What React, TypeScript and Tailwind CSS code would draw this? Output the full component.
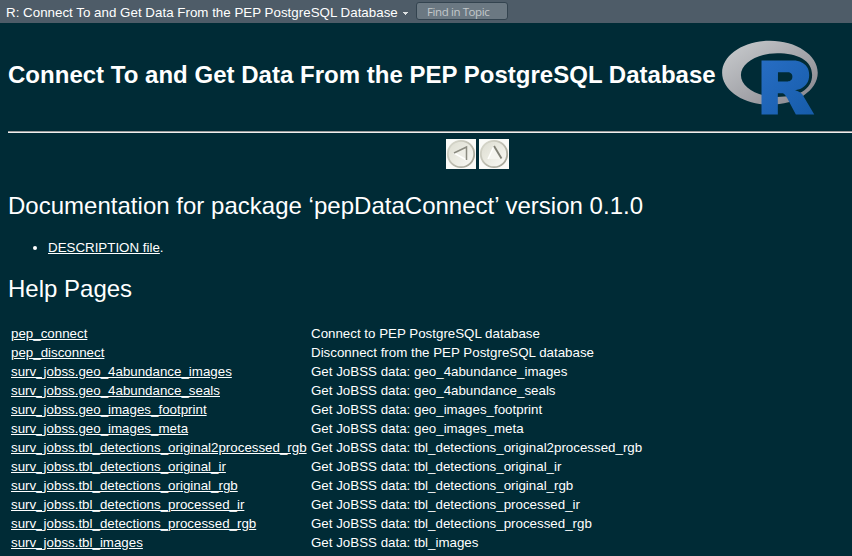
import React from "react";

const rows = [
  ["pep_connect", "Connect to PEP PostgreSQL database"],
  ["pep_disconnect", "Disconnect from the PEP PostgreSQL database"],
  ...[
    "geo_4abundance_images",
    "geo_4abundance_seals",
    "geo_images_footprint",
    "geo_images_meta",
    "tbl_detections_original2processed_rgb",
    "tbl_detections_original_ir",
    "tbl_detections_original_rgb",
    "tbl_detections_processed_ir",
    "tbl_detections_processed_rgb",
    "tbl_images",
  ].map((n) => ["surv_jobss." + n, "Get JoBSS data: " + n]),
];

function RLogo() {
  return (
    <svg viewBox="0 0 724 561" className="h-[75px] w-[96px] shrink-0" aria-label="R logo">
      <defs>
        <linearGradient id="ring" x1="0" y1="0" x2="1" y2="1">
          <stop offset="0" stopColor="#cbced0" />
          <stop offset="1" stopColor="#84838b" />
        </linearGradient>
        <linearGradient id="letter" x1="0" y1="0" x2="1" y2="1">
          <stop offset="0" stopColor="#276dc3" />
          <stop offset="1" stopColor="#165caa" />
        </linearGradient>
      </defs>
      <path fill="url(#ring)" fillRule="evenodd" d="M361.453 485.937C162.329 485.937.906 377.828.906 244.469.906 111.109 162.329 3 361.453 3 560.578 3 722 111.109 722 244.469c0 133.359-161.422 241.468-360.547 241.468ZM416.641 97.406c-151.352 0-274.047 73.908-274.047 165.078s122.695 165.078 274.047 165.078c151.351 0 263.046-50.529 263.046-165.078 0-114.513-111.695-165.078-263.046-165.078Z" />
      <path fill="url(#letter)" fillRule="evenodd" d="M550 377s21.822 6.585 34.5 13c4.399 2.226 12.01 6.668 17.5 12.5 5.378 5.712 8 11.5 8 11.5l86 145-139 .062L492 437s-13.31-22.869-21.5-29.5c-6.832-5.531-9.745-7.5-16.5-7.5h-33.026L421 558.974l-123 .052V152.938h247s112.5 2.029 112.5 109.062S550 377 550 377Zm-53.5-135.976-74.463-.048L422 310.026l74.5-.024s34.5-.107 34.5-35.125c0-35.722-34.5-33.853-34.5-33.853Z" />
    </svg>
  );
}

function NavButton({ up }: { up?: boolean }) {
  return (
    <svg viewBox="0 0 30 30" className="h-[30px] w-[30px]">
      <defs>
        <linearGradient id="disc" x1="0" y1="0" x2="1" y2="1">
          <stop offset="0" stopColor="#dcdcd0" />
          <stop offset="0.5" stopColor="#ebebe2" />
          <stop offset="1" stopColor="#fafaf6" />
        </linearGradient>
        <linearGradient id="rim" x1="0" y1="0" x2="1" y2="1">
          <stop offset="0" stopColor="#dcdcd0" />
          <stop offset="1" stopColor="#a09f92" />
        </linearGradient>
      </defs>
      <rect width="30" height="30" fill="#fafaf7" />
      <circle cx="15" cy="15" r="13.2" fill="url(#disc)" stroke="url(#rim)" strokeWidth="1.8" />
      {up ? (
        <>
          <path d="M9 20 15 7l7 13Z" fill="#f5f5ef" />
          <path d="M9 20 15 7" stroke="#fffffc" strokeWidth="1.4" />
          <path d="m15 7 7.5 12.5" stroke="#808075" strokeWidth="1.9" />
        </>
      ) : (
        <>
          <path d="M8 14 20.5 8v13Z" fill="#eeeee6" />
          <path d="m8 14 12.5 7" stroke="#fffffc" strokeWidth="1.6" />
          <path d="M8 14 20.5 8v13" fill="none" stroke="#8b8b80" strokeWidth="1.5" />
        </>
      )}
    </svg>
  );
}

export default function App() {
  return (
    <div className="h-[556px] w-[852px] overflow-hidden bg-[#002b36] font-['Liberation_Sans',Arial,sans-serif] text-[13.333px] leading-[15px] text-white">
      <header className="flex h-[23px] items-start bg-[#4e5c68] pl-[6px]">
        <span className="mt-[5px] w-[393px] tracking-[0.014px] whitespace-nowrap">R: Connect To and Get Data From the PEP PostgreSQL Database</span>
        <svg viewBox="0 0 5 3" className="mt-[12px] ml-[4px] h-[3px] w-[5px]"><path d="M0 0h5v1H4v1H3v1H2V2H1V1H0Z" fill="#dce0e2" /></svg>
        <div className="mt-[2px] ml-[8px] flex h-[18px] w-[92px] items-center rounded-[3px] border border-[#33434f] bg-[#6b7882] pt-px pl-[10px] font-['Open_Sans',sans-serif] text-[11.5px] tracking-[-0.4px] whitespace-nowrap text-[#c3c8cb]">
          Find in Topic
        </div>
      </header>
      <div className="ml-[8px]">
        <div className="flex pt-[17px]">
          <h1 className="mt-[21px] w-[714px] text-2xl leading-[28px] font-bold tracking-[0.016px] whitespace-nowrap">Connect To and Get Data From the PEP PostgreSQL Database</h1>
          <RLogo />
        </div>
        <hr className="mt-[16px] h-[2px] border-t-[1px] border-b border-t-[#9a9a9a] border-b-[#eeeeee]" />
        <nav className="ml-[438px] flex gap-[3px] pt-[6px]">
          <NavButton />
          <NavButton up />
        </nav>
        <h2 className="mt-[23px] text-2xl leading-[28px] tracking-[0.016px]">Documentation for package ‘pepDataConnect’ version 0.1.0</h2>
        <ul className="mt-[20px] list-disc pl-[40px]">
          <li><a className="underline">DESCRIPTION file</a>.</li>
        </ul>
        <h2 className="mt-[20px] text-2xl leading-[28px]">Help Pages</h2>
        <div className="mt-[21px] ml-[3px]">
          {rows.map(([name, description]) => (
            <div key={name} className="grid h-[19px] grid-cols-[300px_1fr] items-center whitespace-nowrap">
              <div><a className="underline">{name}</a></div>
              <div>{description}</div>
            </div>
          ))}
        </div>
      </div>
    </div>
  );
}
